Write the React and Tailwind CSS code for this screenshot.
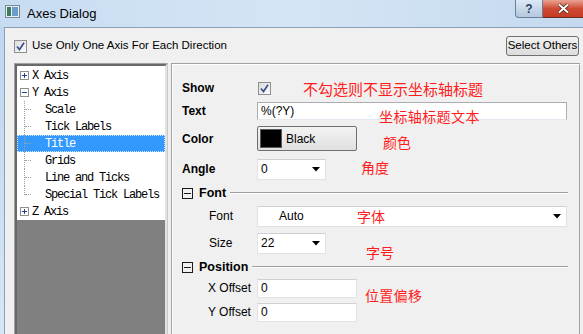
import React from "react";

const UI = { fontFamily: '"Liberation Sans", Arial, sans-serif' };
const MONO = { fontFamily: '"Liberation Mono", "Courier New", monospace' };
const CJK = { fontFamily: '"Noto Sans CJK SC", "Noto Sans", sans-serif' };

function Check() {
  return (
    <div className="w-[13px] h-[13px] border border-[#8e8f8f] bg-gradient-to-br from-[#dcdcdc] to-[#fbfbfb] flex items-center justify-center shrink-0">
      <svg width="9" height="9" viewBox="0 0 9 9">
        <path d="M1 4.5 L3.5 7.5 L8 0.8" fill="none" stroke="#3b4f8a" strokeWidth="1.7" />
      </svg>
    </div>
  );
}

function Arrow() {
  return (
    <svg width="8" height="5" viewBox="0 0 8 5" className="shrink-0">
      <path d="M0 0 H8 L4 4.5 Z" fill="#000" />
    </svg>
  );
}

function Box({ minus }) {
  return (
    <div className="w-[9px] h-[9px] border border-[#8e8e8e] bg-white flex items-center justify-center shrink-0">
      <svg width="7" height="7" viewBox="0 0 7 7">
        <path d="M1 3.5 H6" stroke="#23418f" strokeWidth="1" />
        {!minus && <path d="M3.5 1 V6" stroke="#23418f" strokeWidth="1" />}
      </svg>
    </div>
  );
}

function BigBox() {
  return (
    <div className="w-[11px] h-[11px] border border-[#1a1a1a] flex items-center justify-center shrink-0">
      <div className="w-[7px] h-px bg-[#1a1a1a]" />
    </div>
  );
}

function TreeRow({ children, top, selected, last, child }) {
  return (
    <div className={`h-[17px] flex items-center relative ${selected ? "bg-[#3399ff] outline outline-1 outline-dotted outline-[#cce4ff] -outline-offset-1" : ""}`}>
      {child ? (
        <>
          <div className={`absolute left-[7px] top-0 border-l border-dotted border-[#a0a0a0] ${last ? "h-[9px]" : "h-[17px]"}`} />
          <div className="absolute left-[8px] top-[8px] w-[6px] border-t border-dotted border-[#a0a0a0]" />
          <span className={`ml-[28px] text-[12px] tracking-[-1.2px] ${selected ? "text-white" : "text-black"}`} style={MONO}>
            {children}
          </span>
        </>
      ) : (
        <>
          <div className="ml-[3px]">
            <Box minus={top === "minus"} />
          </div>
          <span className="ml-[3px] text-[12px] tracking-[-1.2px] text-black" style={MONO}>
            {children}
          </span>
        </>
      )}
    </div>
  );
}

function Red({ children, className }) {
  return (
    <span className={`absolute leading-none text-[#ff1c1c] whitespace-nowrap ${className}`} style={CJK}>
      {children}
    </span>
  );
}

export default function App() {
  return (
    <div className="w-[583px] h-[334px] overflow-hidden flex flex-col bg-gradient-to-b from-[#bcd5ef] to-[#d7e6f6] text-black" style={UI}>
      {/* Title bar */}
      <div className="h-[27px] flex items-start shrink-0 bg-gradient-to-r from-[#c7dcf2] via-[#d6e5f5] to-[#c4d9ef]">
        <div className="mt-[5px] ml-[5px] w-[15px] h-[13px] border border-[#7a8a99] bg-[#e8eef4] flex items-center p-[1px] gap-[1px]">
          <div className="w-[4px] h-full bg-[#3d7d5a]" />
          <div className="flex-1 h-full bg-[#6c9cc9]" />
        </div>
        <span className="ml-[7px] mt-[4px] text-[13px] text-black">Axes Dialog</span>
        <div className="flex-1" />
        <div className="w-[28px] h-[18px] border border-t-0 border-[#6b7f97] rounded-bl-[4px] bg-gradient-to-b from-[#dce8f5] to-[#b4c8df] flex items-center justify-center text-[12px] font-bold text-[#2b3f5c]">
          ?
        </div>
        <div className="w-[40px] h-[18px] border-b border-[#6f2a22] bg-gradient-to-b from-[#e8a293] via-[#cf4b33] to-[#c43b22] flex items-center justify-center">
          <svg width="13" height="11" viewBox="0 0 13 11">
            <path d="M2 1.5 L11 9.5 M11 1.5 L2 9.5" stroke="#4a1b12" strokeWidth="3.4" />
            <path d="M2 1.5 L11 9.5 M11 1.5 L2 9.5" stroke="#fff" strokeWidth="2" />
          </svg>
        </div>
      </div>

      {/* Body */}
      <div className="flex-1 ml-[4px] border-l border-t border-[#8aa0b8] bg-[#f0f0f0] flex flex-col">
        <div className="h-[33px] flex items-center pl-[9px] pr-[4px] pt-[3px]">
          <Check />
          <span className="ml-[5px] text-[11.5px]">Use Only One Axis For Each Direction</span>
          <div className="flex-1" />
          <div className="w-[73px] h-[20px] border border-[#707070] rounded-[3px] bg-gradient-to-b from-[#f2f2f2] to-[#dcdcdc] flex items-center justify-center text-[11.5px]">
            Select Others
          </div>
        </div>

        <div className="flex-1 flex pl-[9px] pt-[2px]">
          {/* Tree */}
          <div className="w-[154px] border-t border-l border-[#a0a0a0] border-r border-r-[#c8c8c8]">
            <div className="h-full border-t-2 border-l-2 border-[#696969] border-r-2 border-r-[#e3e3e3] flex flex-col">
              <div className="bg-white pt-px">
                <TreeRow top="plus">X Axis</TreeRow>
                <TreeRow top="minus">Y Axis</TreeRow>
                <TreeRow child>Scale</TreeRow>
                <TreeRow child>Tick Labels</TreeRow>
                <TreeRow child selected>Title</TreeRow>
                <TreeRow child>Grids</TreeRow>
                <TreeRow child>Line and Ticks</TreeRow>
                <TreeRow child last>Special Tick Labels</TreeRow>
                <TreeRow top="plus">Z Axis</TreeRow>
              </div>
              <div className="flex-1 bg-[#808080]" />
            </div>
          </div>

          {/* Right panel */}
          <div className="ml-[3px] flex-1 border-l border-t border-[#a0a0a0] mr-[3px] relative">
            <div className="h-full border-l border-t border-white border-r border-r-[#a0a0a0] flex flex-col pl-[9px] text-[12px]">
              {/* Show */}
              <div className="mt-[15px] h-[16px] flex items-center">
                <span className="w-[75px] font-bold">Show</span>
                <div className="ml-px"><Check /></div>
              </div>
              {/* Text */}
              <div className="mt-[6px] h-[17px] flex items-center">
                <span className="w-[75px] font-bold">Text</span>
                <div className="w-[310px] h-[18px] border border-[#abadb3] border-b-[#e3e9ef] bg-white flex items-center pl-[3px] text-[12px]">
                  %(?Y)
                </div>
              </div>
              {/* Color */}
              <div className="mt-[7px] h-[25px] flex items-center">
                <span className="w-[75px] font-bold">Color</span>
                <div className="w-[100px] h-[25px] border border-[#707070] rounded-[2px] bg-gradient-to-b from-[#f3f3f3] to-[#e0e0e0] flex items-center pl-[2px]">
                  <div className="w-[22px] h-[19px] bg-black border border-[#5a5a5a]" />
                  <span className="ml-[4px]">Black</span>
                </div>
              </div>
              {/* Angle */}
              <div className="mt-[8px] h-[20px] flex items-center">
                <span className="w-[75px] font-bold">Angle</span>
                <div className="w-[69px] h-[21px] border border-[#e3e3e3] border-t-[#d0d0d0] bg-white flex items-center pl-[3px] pr-[5px]">
                  <span className="flex-1">0</span>
                  <Arrow />
                </div>
              </div>
              {/* Font header */}
              <div className="mt-[7px] h-[14px] flex items-center">
                <BigBox />
                <span className="ml-[6px] font-bold text-[12.5px]">Font</span>
                <div className="ml-[4px] flex-1 mr-[11px] h-[2px] border-t border-[#a0a0a0] border-b border-b-white" />
              </div>
              {/* Font row */}
              <div className="mt-[6px] h-[20px] flex items-center">
                <span className="ml-[27px] w-[48px]">Font</span>
                <div className="w-[310px] h-[21px] border border-[#e3e3e3] border-t-[#d0d0d0] bg-white flex items-center pl-[21px] pr-[5px]">
                  <span className="flex-1">Auto</span>
                  <Arrow />
                </div>
              </div>
              {/* Size row */}
              <div className="mt-[7px] h-[20px] flex items-center">
                <span className="ml-[27px] w-[48px]">Size</span>
                <div className="w-[69px] h-[21px] border border-[#e3e3e3] border-t-[#d0d0d0] bg-white flex items-center pl-[3px] pr-[5px]">
                  <span className="flex-1">22</span>
                  <Arrow />
                </div>
              </div>
              {/* Position header */}
              <div className="mt-[7px] h-[14px] flex items-center">
                <BigBox />
                <span className="ml-[6px] font-bold text-[12.5px]">Position</span>
                <div className="ml-[4px] flex-1 mr-[11px] h-[2px] border-t border-[#a0a0a0] border-b border-b-white" />
              </div>
              {/* X offset */}
              <div className="mt-[5px] h-[18px] flex items-center">
                <span className="ml-[26px] w-[49px]">X Offset</span>
                <div className="w-[100px] h-[19px] border border-[#e3e3e3] border-t-[#d0d0d0] bg-white flex items-center pl-[3px]">0</div>
              </div>
              {/* Y offset */}
              <div className="mt-[6px] h-[18px] flex items-center">
                <span className="ml-[26px] w-[49px]">Y Offset</span>
                <div className="w-[100px] h-[19px] border border-[#e3e3e3] border-t-[#d0d0d0] bg-white flex items-center pl-[3px]">0</div>
              </div>
            </div>

            {/* Red annotations */}
            <Red className="left-[131px] top-[17px] text-[15px]">不勾选则不显示坐标轴标题</Red>
            <Red className="left-[207px] top-[45px] text-[14px] tracking-[0.4px]">坐标轴标题文本</Red>
            <Red className="left-[211px] top-[71px] text-[14px]">颜色</Red>
            <Red className="left-[189px] top-[96px] text-[14px]">角度</Red>
            <Red className="left-[185px] top-[145px] text-[14px]">字体</Red>
            <Red className="left-[194px] top-[181px] text-[14px]">字号</Red>
            <Red className="left-[193px] top-[224px] text-[14px] tracking-[0.3px]">位置偏移</Red>
          </div>
        </div>
      </div>
    </div>
  );
}
